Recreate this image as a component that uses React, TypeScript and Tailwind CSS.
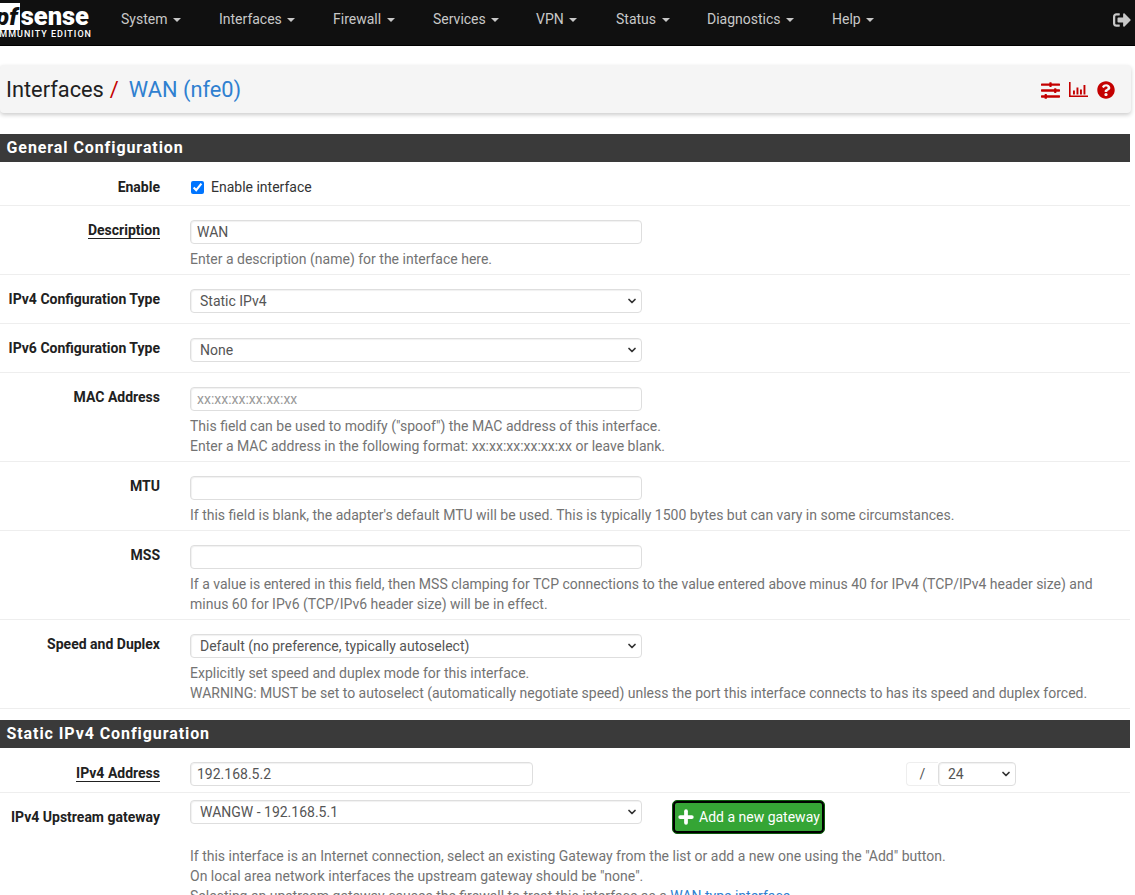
import { Plus, ChevronDown } from "lucide-react";
import { FaSignOutAlt, FaQuestionCircle, FaSlidersH } from "react-icons/fa";

const menu = [
  { name: "System", w: "w-[98px]" },
  { name: "Interfaces", w: "w-[114px]" },
  { name: "Firewall", w: "w-[100px]" },
  { name: "Services", w: "w-[103px]" },
  { name: "VPN", w: "w-[80px]" },
  { name: "Status", w: "w-[91px]" },
  { name: "Diagnostics", w: "w-[125px]" },
  { name: "Help", w: "w-[70px]" },
];

function Label({ text, under, low }: { text: string; under?: boolean; low?: boolean }) {
  return (
    <div className={`w-[160px] shrink-0 text-right text-[14px] leading-[20px] font-bold text-[#212121] ${low ? "pt-[1px]" : ""}`}>
      <span className={under ? "border-b border-[#212121]" : ""}>{text}</span>
    </div>
  );
}

function Input({ value, placeholder, w = "w-[452px]" }: { value?: string; placeholder?: string; w?: string }) {
  return (
    <input
      readOnly
      value={value ?? ""}
      placeholder={placeholder}
      className={`${w} block h-[24px] rounded-[4px] border border-[#dedede] bg-white px-[6px] text-[14px] text-[#555] placeholder:text-[#999] outline-none shadow-[inset_1px_1px_1px_rgba(0,0,0,0.06)]`}
    />
  );
}

function Select({ value, w = "w-[452px]" }: { value: string; w?: string }) {
  return (
    <div className={`${w} flex h-[24px] items-center justify-between rounded-[4px] border border-[#dedede] bg-white pl-[9px] pr-[3px] text-[14px] text-[#555] shadow-[inset_1px_1px_1px_rgba(0,0,0,0.06)]`}>
      <span>{value}</span>
      <ChevronDown size={12} strokeWidth={3.5} className="text-[#333]" />
    </div>
  );
}

function Help({ children }: { children: React.ReactNode }) {
  return <div className="mt-[5px] text-[14px] leading-[20px] text-[#737373]">{children}</div>;
}

function Row({ label, under, low, h, pt = "pt-[14px]", children }: { label: string; under?: boolean; low?: boolean; h: string; pt?: string; children: React.ReactNode }) {
  return (
    <div className={`flex ${h} ${pt} border-b border-[#eeeeee]`}>
      <Label text={label} under={under} low={low} />
      <div className="ml-[30px] min-w-0 flex-1">{children}</div>
    </div>
  );
}

function Heading({ text }: { text: string }) {
  return (
    <div className="flex h-[28px] items-center bg-[#3a3a3a] pl-[6.5px] text-[16px] font-bold tracking-[0.92px] text-white">
      {text}
    </div>
  );
}

function StatsIcon() {
  return (
    <svg width="19" height="16" viewBox="0 0 19 16" fill="#c40000">
      <path d="M0 0h1.6v13.4H19V15H0z" />
      <rect x="4" y="8.5" width="1.9" height="4" />
      <rect x="7.5" y="5.5" width="1.9" height="7" />
      <rect x="11" y="7.5" width="1.9" height="5" />
      <rect x="14.5" y="3" width="1.9" height="9.5" />
    </svg>
  );
}

export default function App() {
  return (
    <div className="h-[895px] w-[1135px] overflow-hidden bg-white font-['Roboto',sans-serif] text-[14px]">
      <nav className="flex h-[46px] items-center border-b border-black bg-[#101010] pb-[6px] text-[14px] text-[#c8c8c8]">
        <div className="h-[45px] w-[106px] shrink-0 self-start overflow-hidden">
          <div className="ml-[-30px] w-[122px]">
            <div className="flex h-[29px] items-start justify-end pt-[3px]">
              <span className="flex h-[27px] w-[46px] items-center justify-end bg-white pr-[2px] text-[24px] leading-none font-black italic text-[#101010]">pf</span>
              <span className="ml-[1px] mr-[3px] text-[25.5px] leading-[26px] font-black text-white">sense</span>
            </div>
            <div className="text-right text-[9px] leading-[10px] font-medium tracking-[1px] text-white whitespace-nowrap">COMMUNITY EDITION</div>
          </div>
        </div>
        <div className="ml-[15px] flex">
          {menu.map((m) => (
            <div key={m.name} className={`${m.w} flex items-center whitespace-nowrap`}>
              {m.name}
              <span className="ml-[5.5px] h-0 w-0 border-x-[4px] border-t-[4px] border-x-transparent border-t-[#c8c8c8]" />
            </div>
          ))}
        </div>
        <div className="ml-auto mr-[4px]">
          <FaSignOutAlt size={18} className="text-[#c8c8c8]" />
        </div>
      </nav>

      <div className="mt-[19px] mr-[4px] flex h-[48px] items-center justify-between rounded-[4px] bg-[#f5f5f5] pt-[2px] pl-[6px] pr-[16px] shadow-[0_2px_4px_rgba(0,0,0,0.2)]">
        <div className="text-[21.8px] leading-none text-[#212121]">
          Interfaces<span className="ml-[6px] text-[#c40000]">/</span>
          <span className="ml-[10px] text-[#2f80d0]">WAN (nfe0)</span>
        </div>
        <div className="flex items-center gap-[9px] text-[#c40000]">
          <FaSlidersH size={19} />
          <StatsIcon />
          <FaQuestionCircle size={18} />
        </div>
      </div>

      <div className="mt-[21px] mr-[5px]">
        <Heading text="General Configuration" />
        <Row label="Enable" h="h-[44px]" pt="pt-[15px]">
          <label className="flex items-center gap-[7px] pl-[1px] text-[14px] leading-[20px] text-[#333]">
            <input type="checkbox" readOnly checked className="size-[13px] accent-[#0075ff]" />
            Enable interface
          </label>
        </Row>
        <Row label="Description" under h="h-[69px]">
          <Input value="WAN" />
          <Help>Enter a description (name) for the interface here.</Help>
        </Row>
        <Row label="IPv4 Configuration Type" h="h-[49px]">
          <Select value="Static IPv4" />
        </Row>
        <Row label="IPv6 Configuration Type" h="h-[49px]">
          <Select value="None" />
        </Row>
        <Row label="MAC Address" h="h-[89px]">
          <Input placeholder="xx:xx:xx:xx:xx:xx" />
          <Help>
            This field can be used to modify ("spoof") the MAC address of this interface.
            <br />
            Enter a MAC address in the following format: xx:xx:xx:xx:xx:xx or leave blank.
          </Help>
        </Row>
        <Row label="MTU" h="h-[69px]">
          <Input />
          <Help>If this field is blank, the adapter's default MTU will be used. This is typically 1500 bytes but can vary in some circumstances.</Help>
        </Row>
        <Row label="MSS" h="h-[89px]">
          <Input />
          <Help>
            If a value is entered in this field, then MSS clamping for TCP connections to the value entered above minus 40 for IPv4 (TCP/IPv4 header size) and minus 60 for IPv6 (TCP/IPv6 header size) will be in effect.
          </Help>
        </Row>
        <Row label="Speed and Duplex" h="h-[89px]">
          <Select value="Default (no preference, typically autoselect)" />
          <Help>
            Explicitly set speed and duplex mode for this interface.
            <br />
            WARNING: MUST be set to autoselect (automatically negotiate speed) unless the port this interface connects to has its speed and duplex forced.
          </Help>
        </Row>
      </div>

      <div className="mt-[11px] mr-[5px]">
        <Heading text="Static IPv4 Configuration" />
        <Row label="IPv4 Address" under low h="h-[45px]">
          <div className="flex">
            <Input value="192.168.5.2" w="w-[343px]" />
            <div className="ml-[373px] flex h-[24px] w-[32px] items-center justify-center rounded-l-[4px] border-y border-l border-[#eeeeee] text-[#555]">/</div>
            <Select value="24" w="w-[78px]" />
          </div>
        </Row>
        <div className="flex pt-[14px]">
          <Label text="IPv4 Upstream gateway" />
          <div className="ml-[30px] flex-1">
            <div className="flex items-start">
              <div className="-mt-[7px]">
                <Select value="WANGW - 192.168.5.1" />
              </div>
              <div className="-mt-[7px] ml-[30px] flex h-[34px] w-[153px] items-center rounded-[5px] border border-[#0c5a0c] bg-[#35a535] pl-[3px] text-[14px] whitespace-nowrap text-white shadow-[inset_0_0_0_2px_#000]">
                <Plus size={20} strokeWidth={4.5} />
                <span className="ml-[3px]">Add a new gateway</span>
              </div>
            </div>
            <div className="mt-[12px] text-[14px] leading-[20px] text-[#737373]">
              If this interface is an Internet connection, select an existing Gateway from the list or add a new one using the "Add" button.
              <br />
              On local area network interfaces the upstream gateway should be "none".
              <br />
              Selecting an upstream gateway causes the firewall to treat this interface as a <span className="text-[#2f80d0]">WAN type interface</span>.
            </div>
          </div>
        </div>
      </div>
    </div>
  );
}
